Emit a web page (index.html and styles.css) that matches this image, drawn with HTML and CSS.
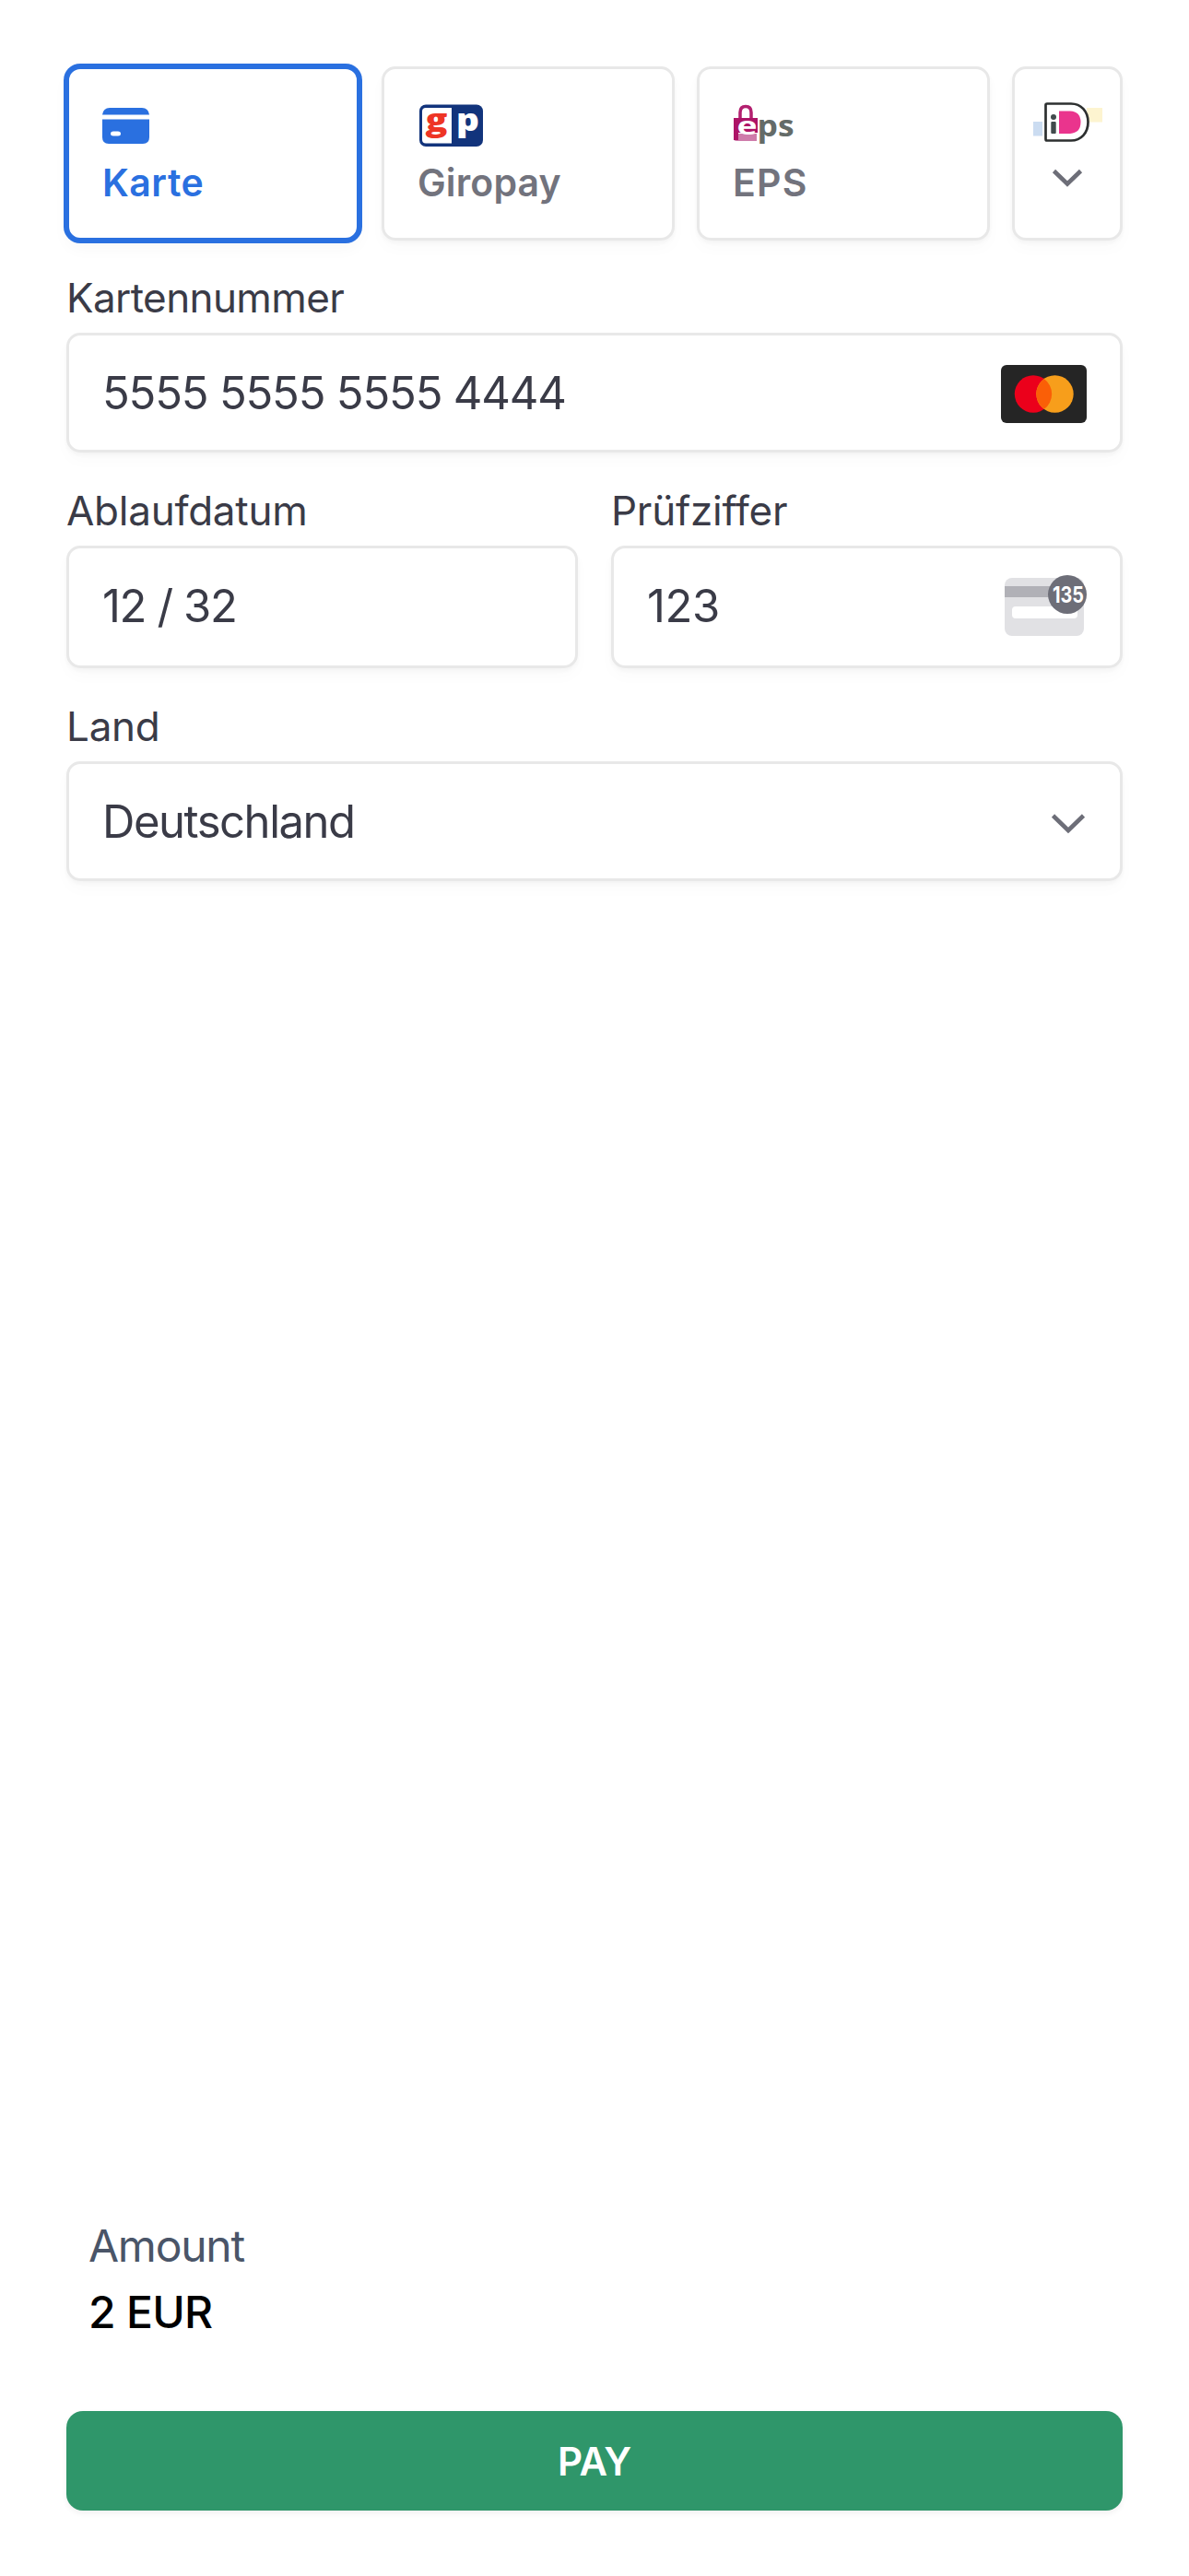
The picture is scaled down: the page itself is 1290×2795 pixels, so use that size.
FILE: index.html
```html
<!DOCTYPE html>
<html lang="de">
<head>
<meta charset="utf-8">
<title>Checkout</title>
<link rel="stylesheet" href="styles.css">
</head>
<body>
<main class="page">
  <div class="tabs">
    <button class="tab tab-active">
      <svg class="tab-icon" width="80" height="48" viewBox="0 0 80 48">
        <path d="M0 12.500Q1 5 8 5H43Q50 5 51 12.500Z" fill="#2a70e0"/>
        <path fill-rule="evenodd" d="M0 17.500H51V37Q51 44 44 44H7Q0 44 0 37ZM12 30.500q-3 0-3 2.500t3 2.500h5q3 0 3-2.500t-3-2.500z" fill="#2a70e0"/>
      </svg>
      <span class="tab-label karte">Karte</span>
    </button>
    <button class="tab">
      <svg class="tab-icon" width="80" height="48" viewBox="0 0 80 48">
        <rect x="2" y="1.500" width="69" height="45.500" rx="7" fill="#12347c"/>
        <path d="M9 5H37V43.500H9Q5 43.500 5 39.500V9Q5 5 9 5Z" fill="#fff"/>
        <text x="8.500" y="30" class="gp" fill="#ee3525" textLength="24" lengthAdjust="spacingAndGlyphs">g</text>
        <text x="42" y="30" class="gp" fill="#fff" textLength="25" lengthAdjust="spacingAndGlyphs">p</text>
      </svg>
      <span class="tab-label giropay">Giropay</span>
    </button>
    <button class="tab">
      <svg class="tab-icon" width="80" height="48" viewBox="0 0 80 48">
        <path d="M8 17V10Q8 3.500 14 3.500T20 10V17" fill="none" stroke="#b3206f" stroke-width="3.500"/>
        <path d="M1 16H27V32H1Z" fill="#ad1467"/>
        <path d="M1 33H26V41H4Q1 41 1 38Z" fill="#cf7cab"/>
        <rect x="1" y="18" width="5" height="22" fill="#ad1467"/>
        <text x="4.500" y="33.500" class="eps-e" fill="#fff" textLength="22" lengthAdjust="spacingAndGlyphs">e</text>
        <text x="26.500" y="36" class="eps-ps" fill="#646b68" textLength="40" lengthAdjust="spacingAndGlyphs">ps</text>
      </svg>
      <span class="tab-label eps">EPS</span>
    </button>
    <button class="tab tab-more">
      <svg class="ideal" width="76" height="44" viewBox="0 0 76 44">
        <rect x="1" y="21" width="10" height="15.500" fill="#cbdcf1"/>
        <rect x="59" y="6" width="17" height="15.500" fill="#fdf4d0"/>
        <path d="M16 1.500H42C53 1.500 60.500 10 60.500 21.500S53 41.500 42 41.500H16Q14.500 41.500 14.500 40V3Q14.500 1.500 16 1.500Z" fill="#fff" stroke="#2d3030" stroke-width="2.700"/>
        <path d="M29 9.500H41Q52.500 10 52.500 21.500T41 34H29Z" fill="#ea348d"/>
        <circle cx="23" cy="16" r="3" fill="#414b4d"/>
        <rect x="20.300" y="21" width="5.400" height="13" rx="1" fill="#414b4d"/>
      </svg>
      <svg class="more-chevron" width="36" height="24" viewBox="0 0 36 24"><path d="M3.500 3.500 18 17.500 32.500 3.500" class="chevron"/></svg>
    </button>
  </div>

  <label class="field">
    <span class="label long">Kartennummer</span>
    <span class="input">
      <span class="card-number">5555 5555 5555 4444</span>
      <svg class="brand" width="93" height="63" viewBox="0 0 93 63">
        <rect width="93" height="63" rx="6" fill="#252525"/>
        <circle cx="35" cy="31.500" r="20.200" fill="#eb001b"/>
        <circle cx="58.500" cy="31.500" r="20.200" fill="#f79e1b"/>
        <path d="M46.750 15.100a20.200 20.200 0 0 1 0 32.800a20.200 20.200 0 0 1 0-32.800z" fill="#fa5f07"/>
      </svg>
    </span>
  </label>

  <div class="row">
    <label class="field">
      <span class="label">Ablaufdatum</span>
      <span class="input input-tall"><span class="expiry">12 / 32</span></span>
    </label>
    <label class="field">
      <span class="label">Prüfziffer</span>
      <span class="input input-tall">
        <span class="cvc">123</span>
        <svg width="93" height="68" viewBox="0 0 93 68">
          <rect x="4" y="4" width="86" height="63" rx="8" fill="#e1e1e4"/>
          <rect x="4" y="13" width="86" height="12" fill="#b1b1b7"/>
          <rect x="12" y="35" width="71" height="13" rx="4" fill="#fff"/>
          <circle cx="72" cy="22" r="21" fill="#6d6e78"/>
          <text x="56" y="31" class="badge" textLength="34" lengthAdjust="spacingAndGlyphs" fill="#fff">135</text>
        </svg>
      </span>
    </label>
  </div>

  <label class="field">
    <span class="label">Land</span>
    <span class="input">
      <span class="country">Deutschland</span>
      <svg class="select-chevron" width="40" height="26" viewBox="0 0 40 26"><path d="M3.500 4 20 20 36.500 4" class="chevron"/></svg>
    </span>
  </label>

  <footer class="footer">
    <div class="amount-label">Amount</div>
    <div class="amount">2 EUR</div>
    <button class="pay">PAY</button>
  </footer>
</main>
</body>
</html>
```
FILE: styles.css
```css
* { box-sizing: border-box; }
body {
  margin: 0;
  background: #fff;
  color: #3a3b47;
  font-family: Inter, "Liberation Sans", sans-serif;
}
button { font: inherit; border: 0; padding: 0; text-align: left; }
svg { display: block; flex: none; overflow: visible; }

.page {
  display: flex;
  flex-direction: column;
  height: 2795px;
  padding: 72px 72px 71px;
}

.tabs {
  display: grid;
  grid-template-columns: 1fr 1fr 1fr 120px;
  gap: 24px;
  height: 189px;
  margin-bottom: 35px;
}
.tab, .input {
  background: #fff;
  border: 3px solid #e8e8e8;
  border-radius: 15px;
  box-shadow: 0 3px 4px rgba(0, 0, 0, .03), 0 9px 18px rgba(0, 0, 0, .02);
}
.tab {
  display: flex;
  flex-direction: column;
  align-items: flex-start;
  padding: 37px 36px 0;
  color: #72737d;
}
.tab-active {
  border-color: #2a70e0;
  box-shadow: 0 0 0 3px #2a70e0, 0 9px 18px rgba(0, 0, 0, .03);
  color: #2a70e0;
}
.tab-label {
  margin-top: 13px;
  font-size: 41px;
  font-weight: 600;
  line-height: 50px;
}
.karte { letter-spacing: .5px; }
.giropay { letter-spacing: .15px; }
.eps { letter-spacing: 1.3px; }
.gp { font: 800 34px "Open Sans", sans-serif; }
.eps-e { font: 700 27px "Open Sans", sans-serif; }
.eps-ps { font: 700 33px "Open Sans", sans-serif; }
.tab-more { align-items: center; padding: 36px 0 0; }
.more-chevron { margin-top: 27px; }
.chevron { fill: none; stroke: #6d6e78; stroke-width: 4.6; }

.field { display: block; }
.label {
  display: block;
  margin-bottom: 11px;
  font-size: 44px;
  line-height: 54px;
  letter-spacing: -.25px;
}
.long { letter-spacing: -.6px; }
.input {
  display: flex;
  align-items: center;
  justify-content: space-between;
  height: 130px;
  margin-bottom: 36px;
  padding: 0 36px;
  font-size: 49px;
}
.input-tall { height: 133px; padding-bottom: 3px; }
.row { display: grid; grid-template-columns: 1fr 1fr; gap: 36px; }
.card-number { letter-spacing: -1.2px; }
.brand { margin-top: 2px; }
.expiry { letter-spacing: -1.4px; }
.cvc { letter-spacing: -.4px; }
.country { letter-spacing: -1.45px; }
.badge { font: 700 24px Inter, sans-serif; }
.select-chevron { margin-top: 6px; }

.footer { margin-top: auto; }
.amount-label, .amount {
  padding-left: 24px;
  font-size: 48px;
  line-height: 72px;
}
.amount-label { color: #4a5568; letter-spacing: -1.25px; }
.amount { color: #000; font-weight: 500; letter-spacing: -.7px; }
.pay {
  display: block;
  width: 100%;
  height: 108px;
  margin-top: 71px;
  border-radius: 18px;
  background: #2f966a;
  box-shadow: 0 3px 6px rgba(0, 0, 0, .06);
  color: #fff;
  font-size: 42px;
  font-weight: 600;
  letter-spacing: -.4px;
  text-align: center;
}
```
